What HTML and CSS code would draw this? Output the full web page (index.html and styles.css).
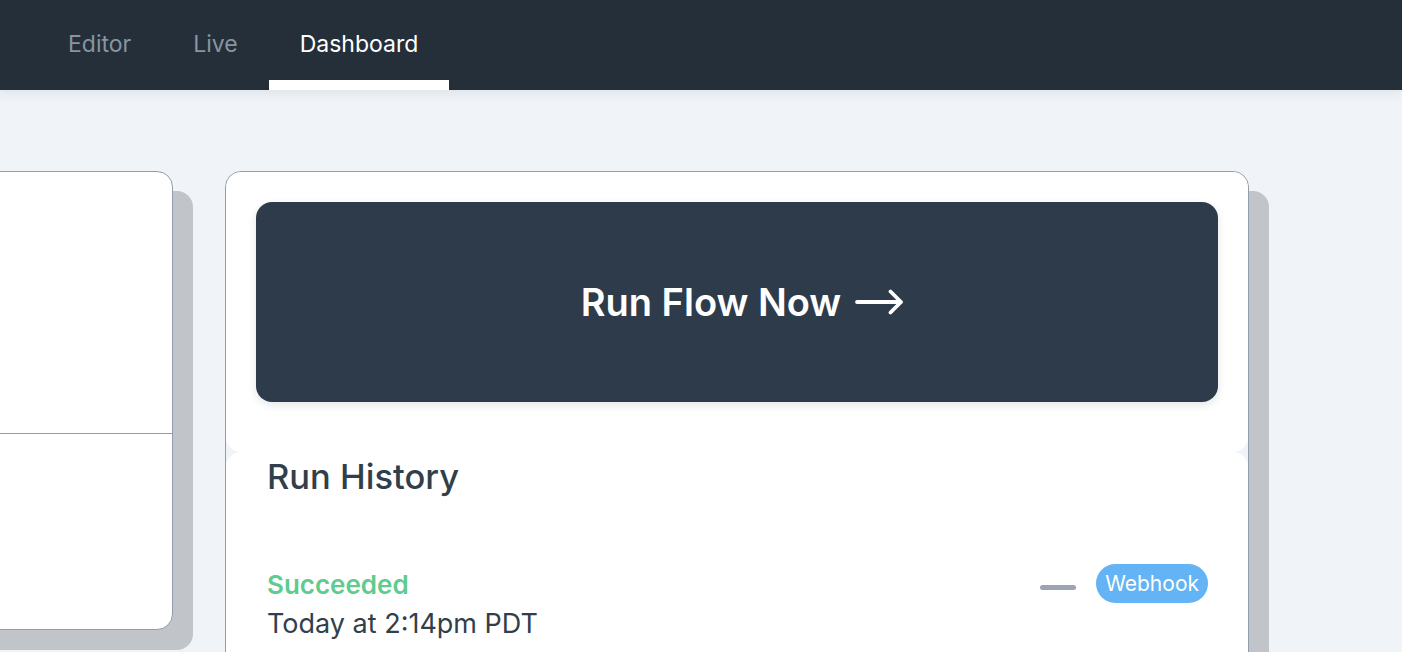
FILE: index.html
```html
<!DOCTYPE html>
<html lang="en">
<head>
<meta charset="utf-8">
<title>Dashboard</title>
<link rel="stylesheet" href="styles.css">
</head>
<body>
<nav class="topnav">
  <div class="tabs">
    <a class="tab" href="#">Editor</a>
    <a class="tab" href="#">Live</a>
    <a class="tab tab-active" href="#">Dashboard</a>
  </div>
</nav>
<main class="board">
  <section class="card card-left">
    <div class="left-top"></div>
    <div class="left-bottom"></div>
  </section>
  <section class="card card-run">
    <div class="panel panel-action">
      <button class="run-btn" type="button">
        <span>Run Flow Now</span>
        <svg class="run-arrow" width="49" height="26" viewBox="0 0 49 26" fill="none" stroke="#fff" stroke-width="3.8" stroke-linecap="round" stroke-linejoin="round"><path d="M2 13H46M35.5 2.5 46 13 35.5 23.5"/></svg>
      </button>
    </div>
    <div class="panel panel-history">
      <h2 class="history-title">Run History</h2>
      <div class="run-row">
        <div class="run-info">
          <div class="run-status">Succeeded</div>
          <div class="run-time">Today at 2:14pm PDT</div>
        </div>
        <div class="run-meta">
          <span class="run-dash"></span>
          <span class="badge">Webhook</span>
        </div>
      </div>
    </div>
  </section>
</main>
</body>
</html>
```
FILE: styles.css
```css
* { box-sizing: border-box; }
html, body { margin: 0; height: 100%; }
body {
  background: #f0f4f8;
  font-family: Inter, "Noto Sans", sans-serif;
  color: #323f4b;
  overflow: hidden;
}
.topnav {
  height: 90px;
  background: #242f3a;
  box-shadow: 0 4px 10px rgba(36, 47, 58, 0.08);
  position: relative;
  z-index: 1;
}
.tabs {
  display: flex;
  height: 100%;
  padding-left: 37px;
}
.tab {
  display: flex;
  align-items: center;
  padding: 0 31px 3px;
  font-size: 23px;
  color: #8795a1;
  text-decoration: none;
}
.tab-active {
  color: #ffffff;
  box-shadow: inset 0 -10px 0 #ffffff;
}
.board {
  display: flex;
  align-items: flex-start;
  gap: 52px;
  padding-top: 81px;
  margin-left: -247px;
}
.card {
  flex: none;
  border: 1.5px solid #919dab;
  border-radius: 16px;
  box-shadow: 20px 20px 0 #c1c5c9;
}
.card-left {
  width: 420px;
  height: 459px;
  background: #ffffff;
  display: flex;
  flex-direction: column;
}
.left-top {
  height: 262px;
  border-bottom: 1.5px solid #919dab;
}
.card-run {
  width: 1024px;
  background: #f0f4f8;
  overflow: hidden;
}
.panel {
  background: #ffffff;
  border-radius: 15px;
}
.panel-action {
  padding: 30px 30px 50px;
}
.run-btn {
  width: 100%;
  height: 200px;
  border: 0;
  border-radius: 16px;
  background: #2d3b4b;
  color: #ffffff;
  font-family: inherit;
  font-size: 38px;
  font-weight: 600;
  display: flex;
  align-items: center;
  justify-content: center;
  gap: 14px;
  box-shadow: 0 3px 8px rgba(36, 47, 58, 0.12);
  padding: 0 0 0 11px;
}
.run-arrow { display: block; }
.panel-history {
  padding: 0 40px 60px 41px;
}
.history-title {
  margin: 0;
  padding-top: 1px;
  font-size: 34.5px;
  font-weight: 500;
  line-height: 48px;
  color: #323f4b;
}
.run-row {
  display: flex;
  justify-content: space-between;
  align-items: flex-start;
  margin-top: 65px;
}
.run-status {
  font-size: 26px;
  font-weight: 600;
  color: #5fcb8f;
  line-height: 38px;
}
.run-time {
  font-size: 27px;
  line-height: 40px;
  color: #323f4b;
}
.run-meta {
  display: flex;
  align-items: flex-start;
  gap: 20px;
  margin-top: -2px;
}
.run-dash {
  width: 36px;
  height: 5px;
  margin-top: 21px;
  border-radius: 3px;
  background: #9aa5b1;
}
.badge {
  height: 39px;
  padding: 0 9px;
  border-radius: 20px;
  background: #63b3f5;
  color: #ffffff;
  font-size: 21px;
  display: flex;
  align-items: center;
}
```
